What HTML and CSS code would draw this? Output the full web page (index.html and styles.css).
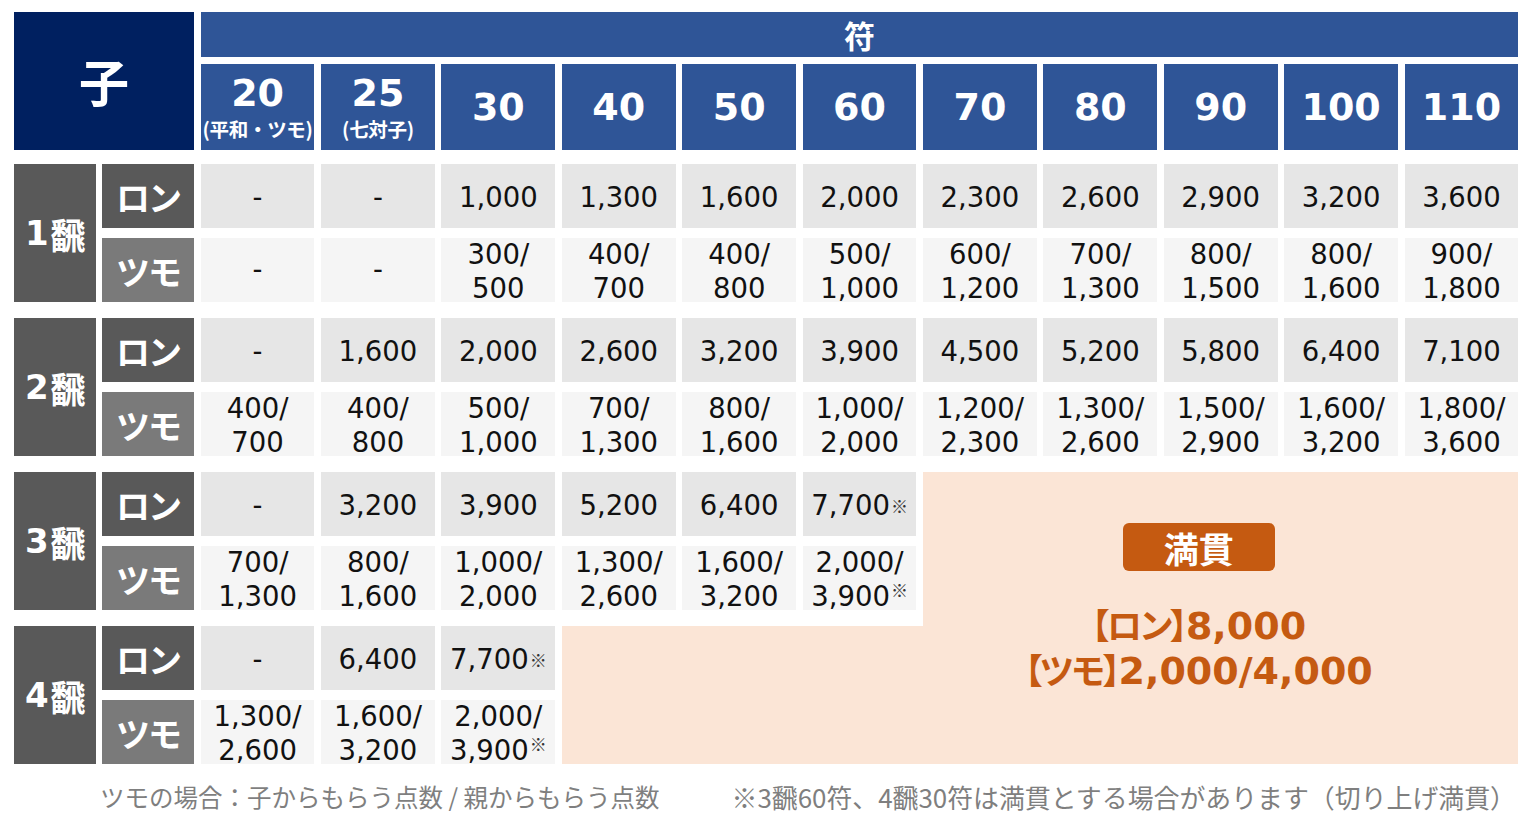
FILE: index.html
```html
<!DOCTYPE html>
<html lang="ja">
<head>
<meta charset="utf-8">
<title>子 点数表</title>
<link rel="stylesheet" href="styles.css">
</head>
<body>
<div class="page">
  <div class="table">
    <div class="ko">子</div>
    <div class="fu-title">符</div>

    <div class="fu fu-two"><span class="fu-num">20</span><span class="fu-sub">(平和・ツモ)</span></div>
    <div class="fu fu-two"><span class="fu-num">25</span><span class="fu-sub">(七対子)</span></div>
    <div class="fu"><span class="fu-num">30</span></div>
    <div class="fu"><span class="fu-num">40</span></div>
    <div class="fu"><span class="fu-num">50</span></div>
    <div class="fu"><span class="fu-num">60</span></div>
    <div class="fu"><span class="fu-num">70</span></div>
    <div class="fu"><span class="fu-num">80</span></div>
    <div class="fu"><span class="fu-num">90</span></div>
    <div class="fu"><span class="fu-num">100</span></div>
    <div class="fu"><span class="fu-num">110</span></div>

    <!-- mangan area -->
    <div class="mangan mangan-low"></div>
    <div class="mangan mangan-main">
      <div class="mangan-badge">満貫</div>
      <div class="mangan-text">
        <div class="mangan-line"><span class="brk">【ロン】</span>8,000</div>
        <div class="mangan-line"><span class="brk">【ツモ】</span>2,000/4,000</div>
      </div>
    </div>

    <!-- 1 han -->
    <div class="han han1"><span class="han-n">1</span>飜</div>
    <div class="lbl ron r1r">ロン</div>
    <div class="lbl tsumo r1t">ツモ</div>
    <div class="v ron r1r">-</div>
    <div class="v ron r1r">-</div>
    <div class="v ron r1r">1,000</div>
    <div class="v ron r1r">1,300</div>
    <div class="v ron r1r">1,600</div>
    <div class="v ron r1r">2,000</div>
    <div class="v ron r1r">2,300</div>
    <div class="v ron r1r">2,600</div>
    <div class="v ron r1r">2,900</div>
    <div class="v ron r1r">3,200</div>
    <div class="v ron r1r">3,600</div>
    <div class="v tsumo dash r1t">-</div>
    <div class="v tsumo dash r1t">-</div>
    <div class="v tsumo r1t">300/<br>500</div>
    <div class="v tsumo r1t">400/<br>700</div>
    <div class="v tsumo r1t">400/<br>800</div>
    <div class="v tsumo r1t">500/<br>1,000</div>
    <div class="v tsumo r1t">600/<br>1,200</div>
    <div class="v tsumo r1t">700/<br>1,300</div>
    <div class="v tsumo r1t">800/<br>1,500</div>
    <div class="v tsumo r1t">800/<br>1,600</div>
    <div class="v tsumo r1t">900/<br>1,800</div>

    <!-- 2 han -->
    <div class="han han2"><span class="han-n">2</span>飜</div>
    <div class="lbl ron r2r">ロン</div>
    <div class="lbl tsumo r2t">ツモ</div>
    <div class="v ron r2r">-</div>
    <div class="v ron r2r">1,600</div>
    <div class="v ron r2r">2,000</div>
    <div class="v ron r2r">2,600</div>
    <div class="v ron r2r">3,200</div>
    <div class="v ron r2r">3,900</div>
    <div class="v ron r2r">4,500</div>
    <div class="v ron r2r">5,200</div>
    <div class="v ron r2r">5,800</div>
    <div class="v ron r2r">6,400</div>
    <div class="v ron r2r">7,100</div>
    <div class="v tsumo r2t">400/<br>700</div>
    <div class="v tsumo r2t">400/<br>800</div>
    <div class="v tsumo r2t">500/<br>1,000</div>
    <div class="v tsumo r2t">700/<br>1,300</div>
    <div class="v tsumo r2t">800/<br>1,600</div>
    <div class="v tsumo r2t">1,000/<br>2,000</div>
    <div class="v tsumo r2t">1,200/<br>2,300</div>
    <div class="v tsumo r2t">1,300/<br>2,600</div>
    <div class="v tsumo r2t">1,500/<br>2,900</div>
    <div class="v tsumo r2t">1,600/<br>3,200</div>
    <div class="v tsumo r2t">1,800/<br>3,600</div>

    <!-- 3 han -->
    <div class="han han3"><span class="han-n">3</span>飜</div>
    <div class="lbl ron r3r">ロン</div>
    <div class="lbl tsumo r3t">ツモ</div>
    <div class="v ron r3r">-</div>
    <div class="v ron r3r">3,200</div>
    <div class="v ron r3r">3,900</div>
    <div class="v ron r3r">5,200</div>
    <div class="v ron r3r">6,400</div>
    <div class="v ron r3r">7,700<span class="kome">※</span></div>
    <div class="v tsumo r3t">700/<br>1,300</div>
    <div class="v tsumo r3t">800/<br>1,600</div>
    <div class="v tsumo r3t">1,000/<br>2,000</div>
    <div class="v tsumo r3t">1,300/<br>2,600</div>
    <div class="v tsumo r3t">1,600/<br>3,200</div>
    <div class="v tsumo r3t">2,000/<br>3,900<span class="kome">※</span></div>

    <!-- 4 han -->
    <div class="han han4"><span class="han-n">4</span>飜</div>
    <div class="lbl ron r4r">ロン</div>
    <div class="lbl tsumo r4t">ツモ</div>
    <div class="v ron r4r">-</div>
    <div class="v ron r4r">6,400</div>
    <div class="v ron r4r">7,700<span class="kome">※</span></div>
    <div class="v tsumo r4t">1,300/<br>2,600</div>
    <div class="v tsumo r4t">1,600/<br>3,200</div>
    <div class="v tsumo r4t">2,000/<br>3,900<span class="kome">※</span></div>
  </div>

  <div class="notes">
    <span class="note-left">ツモの場合：子からもらう点数 / 親からもらう点数</span>
    <span class="note-right">※3飜60符、4飜30符は満貫とする場合があります（切り上げ満貫）</span>
  </div>
</div>
</body>
</html>
```

FILE: styles.css
```css
html, body {
  margin: 0;
  padding: 0;
  background: #ffffff;
}

body {
  font-family: "DejaVu Sans", "Noto Sans CJK JP", sans-serif;
}

.page {
  width: 1536px;
  height: 832px;
  box-sizing: border-box;
  padding: 12px 0 0 14px;
  overflow: hidden;
}

.table {
  display: grid;
  grid-template-columns: 81.5px 92px repeat(11, 113.8px);
  column-gap: 6.6px;
  grid-template-rows:
    45px 7px 86px 14px
    64px 10px 64px 16px
    64px 10px 64px 16px
    64px 10px 64px 16px
    64px 10px 64px;
}

/* header */
.ko {
  grid-column: 1 / 3;
  grid-row: 1 / 4;
  background: #002060;
  color: #fff;
  display: flex;
  align-items: center;
  justify-content: center;
  font-family: "Noto Sans CJK JP", sans-serif;
  font-weight: 700;
  font-size: 50px;
  padding-bottom: 2px;
}

.fu-title {
  grid-column: 3 / 14;
  grid-row: 1;
  background: #2f5597;
  color: #fff;
  display: flex;
  align-items: center;
  justify-content: center;
  font-family: "Noto Sans CJK JP", sans-serif;
  font-weight: 700;
  font-size: 31px;
}

.fu {
  grid-row: 3;
  background: #2f5597;
  color: #fff;
  display: flex;
  flex-direction: column;
  align-items: center;
  justify-content: center;
  font-weight: 700;
}

.fu-two {
  justify-content: flex-start;
  padding-top: 8px;
}

.fu-num {
  font-family: "DejaVu Sans", sans-serif;
  font-size: 38px;
  line-height: 42px;
}

.fu-sub {
  font-family: "Noto Sans CJK JP", sans-serif;
  font-size: 19.5px;
  line-height: 26px;
  margin-top: 2px;
  letter-spacing: -0.3px;
  white-space: nowrap;
}

/* row labels */
.han {
  grid-column: 1;
  background: #595959;
  color: #fff;
  display: flex;
  align-items: center;
  justify-content: center;
  font-family: "Noto Sans CJK JP", sans-serif;
  font-weight: 700;
  font-size: 35px;
  letter-spacing: -1px;
}

.han-n {
  font-family: "DejaVu Sans", sans-serif;
  font-size: 34px;
  margin-right: 3px;
}

.han1 { grid-row: 5 / 8; }
.han2 { grid-row: 9 / 12; }
.han3 { grid-row: 13 / 16; }
.han4 { grid-row: 17 / 20; }

.lbl {
  grid-column: 2;
  color: #fff;
  display: flex;
  align-items: center;
  justify-content: center;
  font-family: "Noto Sans CJK JP", sans-serif;
  font-weight: 700;
  font-size: 34px;
  letter-spacing: -2px;
}

.lbl.ron { background: #595959; }
.lbl.tsumo { background: #7a7a7a; }

.r1r { grid-row: 5; }
.r1t { grid-row: 7; }
.r2r { grid-row: 9; }
.r2t { grid-row: 11; }
.r3r { grid-row: 13; }
.r3t { grid-row: 15; }
.r4r { grid-row: 17; }
.r4t { grid-row: 19; }

/* values */
.v {
  display: flex;
  align-items: center;
  justify-content: center;
  text-align: center;
  font-family: "DejaVu Sans", "Noto Sans CJK JP", sans-serif;
  font-size: 27.5px;
  line-height: 33.5px;
  color: #111;
  white-space: nowrap;
}

.v.ron {
  background: #e6e6e6;
  padding-top: 4px;
  box-sizing: border-box;
}

.v.tsumo {
  background: #f5f5f5;
  display: block;
}

.v.tsumo.dash {
  display: flex;
}

.kome {
  font-family: "Noto Sans CJK JP", sans-serif;
  font-size: 17px;
  vertical-align: 9px;
  line-height: 0;
  margin-left: 1px;
  color: #333;
}

/* mangan */
.mangan {
  background: #fbe5d6;
}

.mangan-low {
  grid-column: 6 / 14;
  grid-row: 17 / 20;
}

.mangan-main {
  grid-column: 9 / 14;
  grid-row: 13 / 20;
  display: flex;
  flex-direction: column;
  align-items: center;
  padding: 51px 44px 0 0;
  color: #c55a11;
}

.mangan-badge {
  width: 152px;
  height: 48px;
  border-radius: 6px;
  background: #c55a11;
  color: #fff;
  display: flex;
  align-items: center;
  justify-content: center;
  font-family: "Noto Sans CJK JP", sans-serif;
  font-weight: 700;
  font-size: 35px;
  line-height: 1;
}

.mangan-text {
  margin-top: 33px;
  text-align: center;
  font-family: "DejaVu Sans", "Noto Sans CJK JP", sans-serif;
  font-weight: 700;
  font-size: 38px;
  line-height: 45px;
  white-space: nowrap;
}

.mangan-line {
  height: 45px;
}

.brk {
  font-family: "Noto Sans CJK JP", sans-serif;
  font-feature-settings: "palt";
  font-size: 35px;
  line-height: 1;
  letter-spacing: -2px;
}

/* notes */
.notes {
  display: flex;
  justify-content: space-between;
  padding: 16px 20px 0 86px;
  font-family: "Noto Sans CJK JP", sans-serif;
  font-size: 25.9px;
  line-height: 34px;
  color: #7f7f7f;
  white-space: nowrap;
}

.note-left {
  font-size: 24.5px;
}
```
